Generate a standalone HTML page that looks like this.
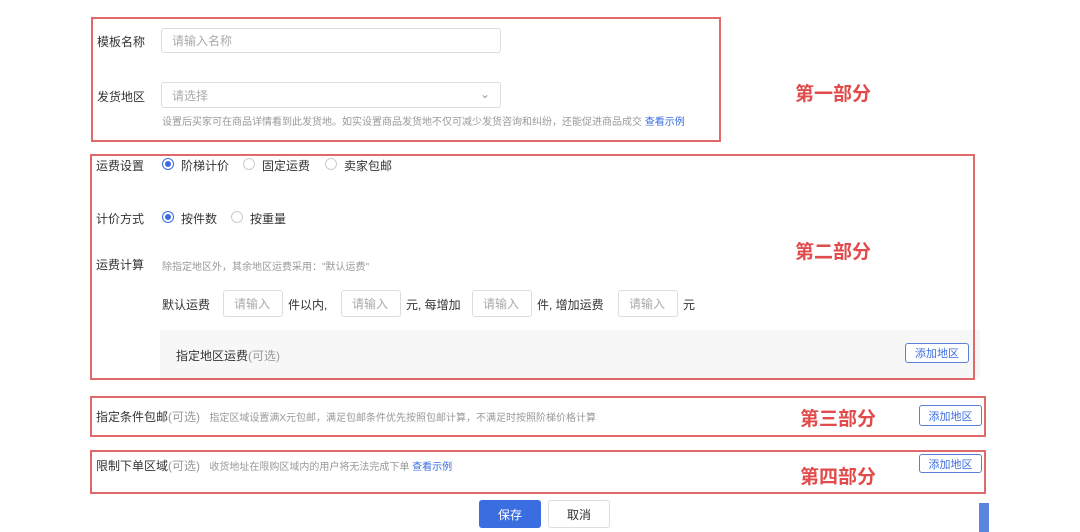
<!DOCTYPE html>
<html><head><meta charset="utf-8"><style>
body{margin:0;width:1080px;height:532px;background:#fff;font-family:"Liberation Sans","Noto Sans CJK SC",sans-serif;position:relative;overflow:hidden;color:#333}
.a{position:absolute;white-space:nowrap}
.box{position:absolute;border:2px solid #e06a6a;box-sizing:border-box;z-index:5}
.lbl{font-size:12px;color:#333}
.inp{position:absolute;border:1px solid #ddd;border-radius:3px;box-sizing:border-box;font-size:12px;color:#aaa;padding-left:10px;display:flex;align-items:center}
.red{font-size:19px;color:#e24b4b;position:absolute;font-weight:bold}
.rad{position:absolute;width:12px;height:12px;border:1px solid #ccc;border-radius:50%;box-sizing:border-box}
.rad.on{border-color:#3a6de0}
.rad.on::after{content:"";position:absolute;left:2px;top:2px;width:6px;height:6px;border-radius:50%;background:#3a6de0}
.btn{position:absolute;border:1px solid #5a80d8;border-radius:3px;font-size:11px;color:#3a6de0;display:flex;align-items:center;justify-content:center;box-sizing:border-box;background:#fff}
.g{color:#999;font-size:10px}
</style></head><body>
<div class="box" style="left:91px;top:17px;width:630px;height:125px"></div>
<div class="a lbl" style="left:97px;top:33px">模板名称</div>
<div class="inp" style="left:161px;top:28px;width:340px;height:25px">请输入名称</div>
<div class="a lbl" style="left:97px;top:88px">发货地区</div>
<div class="inp" style="left:161px;top:82px;width:340px;height:26px">请选择<span style="position:absolute;right:10px;top:4px;color:#999">&#8964;</span></div>
<div class="a g" style="left:162px;top:113px">设置后买家可在商品详情看到此发货地。如实设置商品发货地不仅可减少发货咨询和纠纷，还能促进商品成交 <span style="color:#3a6de0">查看示例</span></div>
<div class="red" style="left:795px;top:79px">第一部分</div>

<div class="box" style="left:90px;top:154px;width:885px;height:226px"></div>
<div class="a lbl" style="left:96px;top:157px">运费设置</div>
<div class="rad on" style="left:162px;top:158px"></div><div class="a lbl" style="left:181px;top:157px">阶梯计价</div>
<div class="rad" style="left:243px;top:158px"></div><div class="a lbl" style="left:262px;top:157px">固定运费</div>
<div class="rad" style="left:325px;top:158px"></div><div class="a lbl" style="left:344px;top:157px">卖家包邮</div>
<div class="a lbl" style="left:96px;top:210px">计价方式</div>
<div class="rad on" style="left:162px;top:211px"></div><div class="a lbl" style="left:181px;top:210px">按件数</div>
<div class="rad" style="left:231px;top:211px"></div><div class="a lbl" style="left:250px;top:210px">按重量</div>
<div class="a lbl" style="left:96px;top:256px">运费计算</div>
<div class="a g" style="left:162px;top:258px">除指定地区外，其余地区运费采用："默认运费"</div>
<div class="a lbl" style="left:162px;top:296px">默认运费</div>
<div class="inp" style="left:223px;top:290px;width:60px;height:27px">请输入</div>
<div class="a lbl" style="left:288px;top:296px">件以内,</div>
<div class="inp" style="left:341px;top:290px;width:60px;height:27px">请输入</div>
<div class="a lbl" style="left:406px;top:296px">元, 每增加</div>
<div class="inp" style="left:472px;top:290px;width:60px;height:27px">请输入</div>
<div class="a lbl" style="left:537px;top:296px">件, 增加运费</div>
<div class="inp" style="left:618px;top:290px;width:60px;height:27px">请输入</div>
<div class="a lbl" style="left:683px;top:296px">元</div>
<div class="a" style="left:160px;top:330px;width:820px;height:48px;background:#f7f7f8"></div>
<div class="a lbl" style="left:176px;top:347px">指定地区运费<span style="color:#999">(可选)</span></div>
<div class="btn" style="left:905px;top:343px;width:64px;height:20px">添加地区</div>
<div class="red" style="left:795px;top:237px">第二部分</div>

<div class="box" style="left:90px;top:396px;width:896px;height:41px"></div>
<div class="a lbl" style="left:96px;top:408px">指定条件包邮<span style="color:#999">(可选)</span> <span class="g" style="margin-left:6px">指定区域设置满X元包邮，满足包邮条件优先按照包邮计算，不满足时按照阶梯价格计算</span></div>
<div class="red" style="left:800px;top:404px">第三部分</div>
<div class="btn" style="left:919px;top:405px;width:63px;height:21px">添加地区</div>

<div class="box" style="left:90px;top:450px;width:896px;height:44px"></div>
<div class="a lbl" style="left:96px;top:457px">限制下单区域<span style="color:#999">(可选)</span> <span class="g" style="margin-left:6px">收货地址在限购区域内的用户将无法完成下单 <span style="color:#3a6de0">查看示例</span></span></div>
<div class="red" style="left:800px;top:462px">第四部分</div>
<div class="btn" style="left:919px;top:454px;width:63px;height:19px">添加地区</div>

<div class="a" style="left:479px;top:500px;width:62px;height:28px;background:#3a6de0;border-radius:3px;color:#fff;font-size:12px;display:flex;align-items:center;justify-content:center">保存</div>
<div class="a" style="left:548px;top:500px;width:62px;height:28px;border:1px solid #ddd;box-sizing:border-box;border-radius:3px;font-size:12px;display:flex;align-items:center;justify-content:center">取消</div>
<div class="a" style="left:979px;top:503px;width:10px;height:29px;background:#5a84e0"></div>
</body></html>
